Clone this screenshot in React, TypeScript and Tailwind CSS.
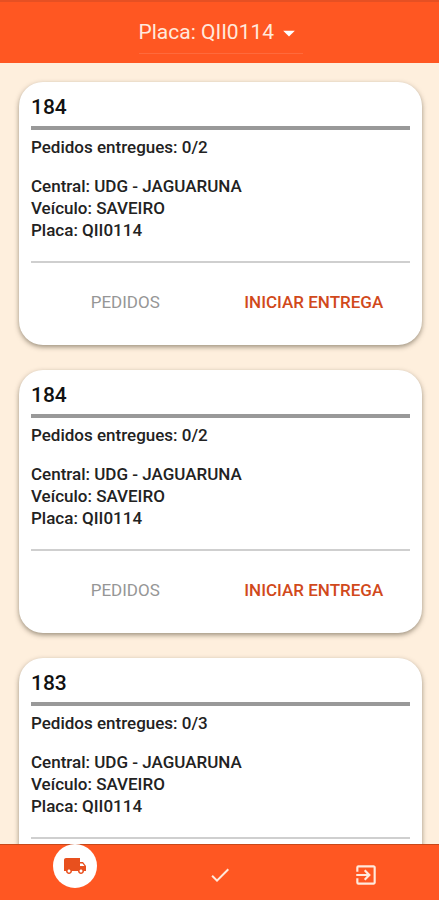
import { useState } from 'react'
import { MdArrowDropDown, MdCheck, MdExitToApp, MdLocalShipping } from 'react-icons/md'

type Delivery = { id: number; route: string; done: string; central: string; vehicle: string; plate: string }

const deliveries: Delivery[] = [
  { id: 1, route: '184', done: '0/2', central: 'UDG - JAGUARUNA', vehicle: 'SAVEIRO', plate: 'QII0114' },
  { id: 2, route: '184', done: '0/2', central: 'UDG - JAGUARUNA', vehicle: 'SAVEIRO', plate: 'QII0114' },
  { id: 3, route: '183', done: '0/3', central: 'UDG - JAGUARUNA', vehicle: 'SAVEIRO', plate: 'QII0114' },
]

function PlateSelect() {
  const [plate, setPlate] = useState('QII0114')
  return (
    <div className="relative flex items-center border-b border-[#ff6a3c]">
      <select aria-label="Placa" value={plate} onChange={(e) => setPlate(e.target.value)}
        className="appearance-none h-10 w-[164px] bg-transparent text-[21px] text-[#ffe9dc] outline-none">
        <option value="QII0114">Placa: QII0114</option>
      </select>
      <MdArrowDropDown className="absolute right-0 size-7 text-white pointer-events-none" />
    </div>
  )
}

function DeliveryCard({ item }: { item: Delivery }) {
  return (
    <article className="shrink-0 rounded-3xl bg-white px-3 pt-3 pb-[21px] shadow-[0_2px_5px_rgba(60,50,30,0.5)]">
      <h2 className="text-[21px] leading-[26px] font-medium text-[#111111]">{item.route}</h2>
      <div className="mt-1.5 h-1 bg-[#999999]" />
      <div className="mt-1.5 text-[17px] leading-[22px] font-medium text-[#222222]">
        <p>Pedidos entregues: {item.done}</p>
        <p className="mt-[17px]">Central: {item.central}</p>
        <p>Veículo: {item.vehicle}</p>
        <p>Placa: {item.plate}</p>
      </div>
      <div className="mt-5 h-0.5 bg-[#cfcfcf]" />
      <div className="mt-[17px] grid grid-cols-2 pr-0.5 text-[17px] leading-[22px]">
        <button type="button" className="h-11 text-[#969696]">PEDIDOS</button>
        <button type="button" className="h-11 font-medium text-[#d1491b]">INICIAR ENTREGA</button>
      </div>
    </article>
  )
}

function BottomNav() {
  return (
    <nav className="grid h-14 shrink-0 grid-cols-3 bg-[#ff5722] pl-0.5 text-[#ffe9dc] shadow-[inset_0_1px_0_#c8481a]">
      <button type="button" aria-label="Entregas" className="flex items-start justify-center">
        <span className="flex size-11 items-center justify-center rounded-full bg-white text-[#e8501e]">
          <MdLocalShipping className="size-6" />
        </span>
      </button>
      <button type="button" aria-label="Concluídas" className="flex items-center justify-center pt-1.5">
        <MdCheck className="size-6" />
      </button>
      <button type="button" aria-label="Sair" className="flex items-center justify-center pt-1.5">
        <MdExitToApp className="size-[26px]" />
      </button>
    </nav>
  )
}

export default function App() {
  return (
    <div className="flex h-screen flex-col bg-[#feefdd] font-['Roboto',sans-serif]">
      <header className="flex h-[63px] shrink-0 items-start justify-center border-t-2 border-[#e65023] bg-[#ff5722] pt-[11px] pl-0.5">
        <PlateSelect />
      </header>
      <main className="flex min-h-0 flex-1 flex-col gap-[25px] overflow-y-auto pt-[19px] pr-[17px] pl-[19px] [scrollbar-width:none]">
        {deliveries.map((d) => <DeliveryCard key={d.id} item={d} />)}
      </main>
      <BottomNav />
    </div>
  )
}
